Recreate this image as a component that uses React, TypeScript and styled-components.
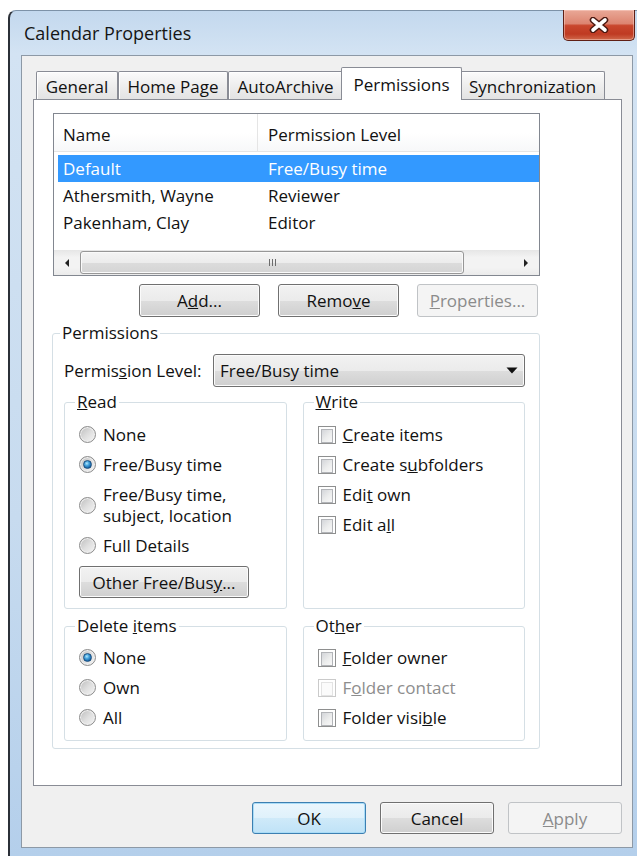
import React from "react";
import styled, { createGlobalStyle, css } from "styled-components";

const GlobalStyle = createGlobalStyle`
  html, body {
    margin: 0;
    padding: 0;
    background: #fff;
  }
  body {
    font-family: "Open Sans", "Noto Sans", sans-serif;
    font-size: 17px;
    color: #111;
  }
  * {
    box-sizing: border-box;
  }
`;

const tabs = [
  { label: "General", width: 82 },
  { label: "Home Page", width: 110 },
  { label: "AutoArchive", width: 115 },
  { label: "Permissions", width: 117, active: true },
  { label: "Synchronization", width: 145 },
];

const members = [
  { name: "Default", level: "Free/Busy time", selected: true },
  { name: "Athersmith, Wayne", level: "Reviewer" },
  { name: "Pakenham, Clay", level: "Editor" },
];

const Screen = styled.div`
  width: 637px;
  height: 856px;
  overflow: hidden;
  padding: 10px 0 0 8px;
`;

const Window = styled.div`
  height: 846px;
  display: flex;
  flex-direction: column;
  border-left: 2px solid #2b3038;
  border-top: 1px solid #7d92a8;
  border-top-left-radius: 8px;
  padding: 0 4px 8px 11px;
  background: linear-gradient(180deg, #c3d8ee 0%, #d3e3f3 5%, #c7dbef 60%, #b4cfeb 100%);
`;

const TitleBar = styled.div`
  flex: none;
  height: 44px;
  display: flex;
  align-items: center;
  justify-content: space-between;
`;

const Title = styled.div`
  margin-left: 3px;
  font-size: 18px;
  color: #151515;
`;

const CloseButton = styled.div`
  align-self: flex-start;
  margin-top: -1px;
  margin-right: -2px;
  width: 72px;
  height: 31px;
  display: flex;
  align-items: center;
  justify-content: center;
  border: 1px solid #5f1f15;
  border-top: none;
  border-radius: 0 0 5px 5px;
  background: linear-gradient(
    180deg,
    #e9a897 0%,
    #dd8571 45%,
    #c9472e 52%,
    #bf3a22 80%,
    #d0694b 100%
  );
  box-shadow: inset 0 0 0 1px rgba(255, 220, 210, 0.45);
`;

const Client = styled.div`
  flex: 1;
  display: flex;
  flex-direction: column;
  border: 1px solid #8d99a6;
  background: #f0f0f0;
  padding: 11px 10px 13px 11px;
`;

const TabStrip = styled.div`
  flex: none;
  position: relative;
  z-index: 1;
  height: 32px;
  display: flex;
  align-items: flex-end;
  padding-left: 3px;
`;

const Tab = styled.div<{ $active?: boolean; $width: number }>`
  width: ${(p) => (p.$active ? p.$width + 4 : p.$width)}px;
  height: ${(p) => (p.$active ? 33 : 28)}px;
  margin: ${(p) => (p.$active ? "0 -2px -1px" : "0")};
  padding-top: ${(p) => (p.$active ? 0 : 2)}px;
  display: flex;
  align-items: center;
  justify-content: center;
  border: 1px solid #898c95;
  border-bottom: none;
  border-radius: 2px 2px 0 0;
  white-space: nowrap;
  ${(p) =>
    p.$active
      ? css`
          position: relative;
          z-index: 2;
          background: #fff;
        `
      : css`
          background: linear-gradient(180deg, #fbfbfb 0%, #eeeeee 50%, #e3e3e3 100%);
          box-shadow: inset 1px 1px 0 #fff;
        `}
`;

const Panel = styled.div`
  flex: 1;
  background: #fff;
  border: 1px solid #898c95;
  padding: 13px 0 0 18px;
`;

const Column = styled.div`
  width: 488px;
  display: flex;
  flex-direction: column;
`;

const ListBox = styled.div`
  margin-left: 1px;
  height: 163px;
  display: flex;
  flex-direction: column;
  border: 1px solid #828790;
  background: #fff;
`;

const ListHeader = styled.div`
  flex: none;
  height: 38px;
  display: grid;
  grid-template-columns: 204px 1fr;
  border-bottom: 1px solid #e5e5e5;
  background: linear-gradient(180deg, #ffffff 0%, #ffffff 50%, #f7f8f9 100%);
`;

const HeaderCell = styled.div<{ $pad: number; $divider?: boolean }>`
  display: flex;
  align-items: center;
  padding: 4px 0 0 ${(p) => p.$pad}px;
  border-right: ${(p) => (p.$divider ? "1px solid #e5e5e5" : "none")};
`;

const Rows = styled.div`
  flex: 1;
  padding-top: 3px;
`;

const Row = styled.div<{ $selected?: boolean }>`
  height: 27px;
  margin-left: 4px;
  display: grid;
  grid-template-columns: 205px 1fr;
  align-items: center;
  padding-left: 5px;
  background: ${(p) => (p.$selected ? "#3399ff" : "transparent")};
  color: ${(p) => (p.$selected ? "#fff" : "inherit")};
`;

const ScrollBar = styled.div`
  flex: none;
  height: 25px;
  display: flex;
  align-items: center;
  background: linear-gradient(180deg, #e6e6e6 0%, #f3f3f3 30%, #f3f3f3 70%, #ebebeb 100%);
`;

const ScrollArrow = styled.div<{ $dir: "left" | "right" }>`
  width: 26px;
  height: 100%;
  display: flex;
  align-items: center;
  justify-content: center;
  &::before {
    content: "";
    width: 0;
    height: 0;
    border-top: 4px solid transparent;
    border-bottom: 4px solid transparent;
    ${(p) =>
      p.$dir === "left"
        ? "border-right: 4px solid #222;"
        : "border-left: 4px solid #222;"}
  }
`;

const ScrollTrack = styled.div`
  flex: 1;
  height: 100%;
  display: flex;
  align-items: center;
`;

const Thumb = styled.div`
  width: 384px;
  height: 23px;
  display: flex;
  align-items: center;
  justify-content: center;
  border: 1px solid #979797;
  border-radius: 3px;
  background: linear-gradient(180deg, #f4f4f4 0%, #ececec 50%, #dcdcdc 51%, #d4d4d4 100%);
  box-shadow: inset 0 0 0 1px #fafafa;
  &::before {
    content: "";
    width: 7px;
    height: 7px;
    background: repeating-linear-gradient(90deg, #6c6c6c 0 1px, transparent 1px 3px);
  }
`;

const ButtonRow = styled.div`
  margin-top: 8px;
  display: flex;
  justify-content: flex-end;
  gap: 18px;
  padding-right: 2px;
`;

const Button = styled.button<{ $width: number; $default?: boolean }>`
  width: ${(p) => p.$width}px;
  height: 33px;
  padding: 0;
  font-family: inherit;
  font-size: 17px;
  color: #111;
  border: 1px solid #707070;
  border-radius: 3px;
  background: linear-gradient(180deg, #f2f2f2 0%, #ebebeb 50%, #dddddd 51%, #cfcfcf 100%);
  box-shadow: inset 0 0 0 1px #fbfbfb;
  ${(p) =>
    p.$default &&
    css`
      border-color: #3c7fb1;
      background: linear-gradient(180deg, #eaf6fd 0%, #dff1fb 50%, #cfeaf9 51%, #bfe2f7 100%);
      box-shadow: inset 0 0 0 1px #a9dcf7;
    `}
  &:disabled {
    color: #8b8b8b;
    border-color: #c0c3c6;
    background: #f4f4f4;
    box-shadow: none;
  }
`;

const Group = styled.fieldset<{ $pad: string }>`
  margin: 0;
  min-width: 0;
  padding: ${(p) => p.$pad};
  border: 1px solid #d5dfe5;
  border-radius: 3px;
`;

const Legend = styled.legend`
  margin-left: -4px;
  padding: 0 2px;
  line-height: 20px;
`;

const PermissionsGroup = styled(Group)`
  margin-top: 6px;
`;

const LevelRow = styled.div`
  height: 33px;
  display: grid;
  grid-template-columns: 149px 1fr;
  align-items: center;
`;

const Select = styled.div`
  height: 33px;
  display: flex;
  align-items: center;
  justify-content: space-between;
  padding: 0 6px 0 6px;
  border: 1px solid #707070;
  border-radius: 3px;
  background: linear-gradient(180deg, #f2f2f2 0%, #ebebeb 50%, #dddddd 51%, #cfcfcf 100%);
  box-shadow: inset 0 0 0 1px #fbfbfb;
`;

const SubGrid = styled.div`
  margin-top: 5px;
  display: grid;
  grid-template-columns: 1fr 1fr;
  column-gap: 16px;
  row-gap: 7px;
`;

const Option = styled.label<{ $disabled?: boolean }>`
  display: flex;
  align-items: center;
  gap: 7px;
  padding: 4px 0 5px;
  line-height: 21px;
  color: ${(p) => (p.$disabled ? "#8d8d8d" : "inherit")};
`;

const RadioDot = styled.span<{ $checked?: boolean }>`
  position: relative;
  flex: none;
  width: 17px;
  height: 17px;
  border-radius: 50%;
  border: 1px solid #8c8c8c;
  background: linear-gradient(135deg, #bdbdbd 0%, #dedede 50%, #f6f6f6 100%);
  box-shadow: inset 0 0 0 1px #efefef;
  ${(p) =>
    p.$checked &&
    css`
      &::after {
        content: "";
        position: absolute;
        inset: 3px;
        border-radius: 50%;
        border: 1px solid #1c4f7f;
        background: radial-gradient(
          circle at 40% 35%,
          #b4e7fd 0%,
          #47a5dd 35%,
          #135fa2 75%,
          #0c4277 100%
        );
      }
    `}
`;

const CheckBox = styled.span<{ $disabled?: boolean }>`
  flex: none;
  width: 18px;
  height: 18px;
  padding: 2px;
  border: 1px solid ${(p) => (p.$disabled ? "#cacaca" : "#8e8f8f")};
  background: #fff;
  &::before {
    content: "";
    display: block;
    height: 100%;
    border: 1px solid ${(p) => (p.$disabled ? "#e3e3e3" : "#b2b4b8")};
    background: ${(p) =>
      p.$disabled ? "#fbfbfb" : "linear-gradient(135deg, #d3d5d9 0%, #eceded 55%, #f8f8f8 100%)"};
  }
`;

const OtherButton = styled(Button)`
  margin-top: 5px;
  height: 32px;
`;

const Footer = styled.div`
  flex: none;
  margin-top: 16px;
  display: flex;
  justify-content: flex-end;
  gap: 14px;
`;

const FooterButton = styled(Button)`
  height: 32px;
`;

const CloseGlyph = () => (
  <svg width="22" height="16" viewBox="0 0 22 16">
    <path d="M5 3 L17 13 M17 3 L5 13" stroke="#4a1810" strokeWidth="6.5" strokeLinecap="round" />
    <path d="M5 3 L17 13 M17 3 L5 13" stroke="#fff" strokeWidth="3.6" strokeLinecap="round" />
  </svg>
);

const DropArrow = () => (
  <svg width="12" height="7" viewBox="0 0 12 7">
    <path d="M0.5 0.5 L11.5 0.5 L6 6.5 Z" fill="#111" />
  </svg>
);

const App = () => {
  return (
    <Screen>
      <GlobalStyle />
      <Window>
        <TitleBar>
          <Title>Calendar Properties</Title>
          <CloseButton>
            <CloseGlyph />
          </CloseButton>
        </TitleBar>
        <Client>
          <TabStrip>
            {tabs.map((t) => (
              <Tab key={t.label} $active={t.active} $width={t.width}>
                {t.label}
              </Tab>
            ))}
          </TabStrip>
          <Panel>
            <Column>
              <ListBox>
                <ListHeader>
                  <HeaderCell $pad={9} $divider>
                    Name
                  </HeaderCell>
                  <HeaderCell $pad={10}>Permission Level</HeaderCell>
                </ListHeader>
                <Rows>
                  {members.map((m) => (
                    <Row key={m.name} $selected={m.selected}>
                      <span>{m.name}</span>
                      <span>{m.level}</span>
                    </Row>
                  ))}
                </Rows>
                <ScrollBar>
                  <ScrollArrow $dir="left" />
                  <ScrollTrack>
                    <Thumb />
                  </ScrollTrack>
                  <ScrollArrow $dir="right" />
                </ScrollBar>
              </ListBox>

              <ButtonRow>
                <Button $width={121}>
                  A<u>d</u>d...
                </Button>
                <Button $width={121}>
                  Remo<u>v</u>e
                </Button>
                <Button $width={121} disabled>
                  <u>P</u>roperties...
                </Button>
              </ButtonRow>

              <PermissionsGroup $pad="11px 14px 7px 11px">
                <Legend>Permissions</Legend>
                <LevelRow>
                  <span>
                    Permis<u>s</u>ion Level:
                  </span>
                  <Select>
                    <span>Free/Busy time</span>
                    <DropArrow />
                  </Select>
                </LevelRow>

                <SubGrid>
                  <Group $pad="8px 8px 10px 14px">
                    <Legend>
                      <u>R</u>ead
                    </Legend>
                    <Option>
                      <RadioDot />
                      None
                    </Option>
                    <Option>
                      <RadioDot $checked />
                      Free/Busy time
                    </Option>
                    <Option>
                      <RadioDot />
                      <span>
                        Free/Busy time,
                        <br />
                        subject, location
                      </span>
                    </Option>
                    <Option>
                      <RadioDot />
                      Full Details
                    </Option>
                    <OtherButton $width={170}>
                      Other Free/Bus<u>y</u>...
                    </OtherButton>
                  </Group>

                  <Group $pad="8px 8px 10px 14px">
                    <Legend>
                      <u>W</u>rite
                    </Legend>
                    <Option>
                      <CheckBox />
                      <span>
                        <u>C</u>reate items
                      </span>
                    </Option>
                    <Option>
                      <CheckBox />
                      <span>
                        Create s<u>u</u>bfolders
                      </span>
                    </Option>
                    <Option>
                      <CheckBox />
                      <span>
                        Edi<u>t</u> own
                      </span>
                    </Option>
                    <Option>
                      <CheckBox />
                      <span>
                        Edit a<u>l</u>l
                      </span>
                    </Option>
                  </Group>

                  <Group $pad="7px 8px 7px 14px">
                    <Legend>
                      Delete <u>i</u>tems
                    </Legend>
                    <Option>
                      <RadioDot $checked />
                      None
                    </Option>
                    <Option>
                      <RadioDot />
                      Own
                    </Option>
                    <Option>
                      <RadioDot />
                      All
                    </Option>
                  </Group>

                  <Group $pad="7px 8px 7px 14px">
                    <Legend>
                      Ot<u>h</u>er
                    </Legend>
                    <Option>
                      <CheckBox />
                      <span>
                        <u>F</u>older owner
                      </span>
                    </Option>
                    <Option $disabled>
                      <CheckBox $disabled />
                      <span>
                        F<u>o</u>lder contact
                      </span>
                    </Option>
                    <Option>
                      <CheckBox />
                      <span>
                        Folder visi<u>b</u>le
                      </span>
                    </Option>
                  </Group>
                </SubGrid>
              </PermissionsGroup>
            </Column>
          </Panel>
          <Footer>
            <FooterButton $width={114} $default>
              OK
            </FooterButton>
            <FooterButton $width={114}>Cancel</FooterButton>
            <FooterButton $width={114} disabled>
              <u>A</u>pply
            </FooterButton>
          </Footer>
        </Client>
      </Window>
    </Screen>
  );
};

export default App;
